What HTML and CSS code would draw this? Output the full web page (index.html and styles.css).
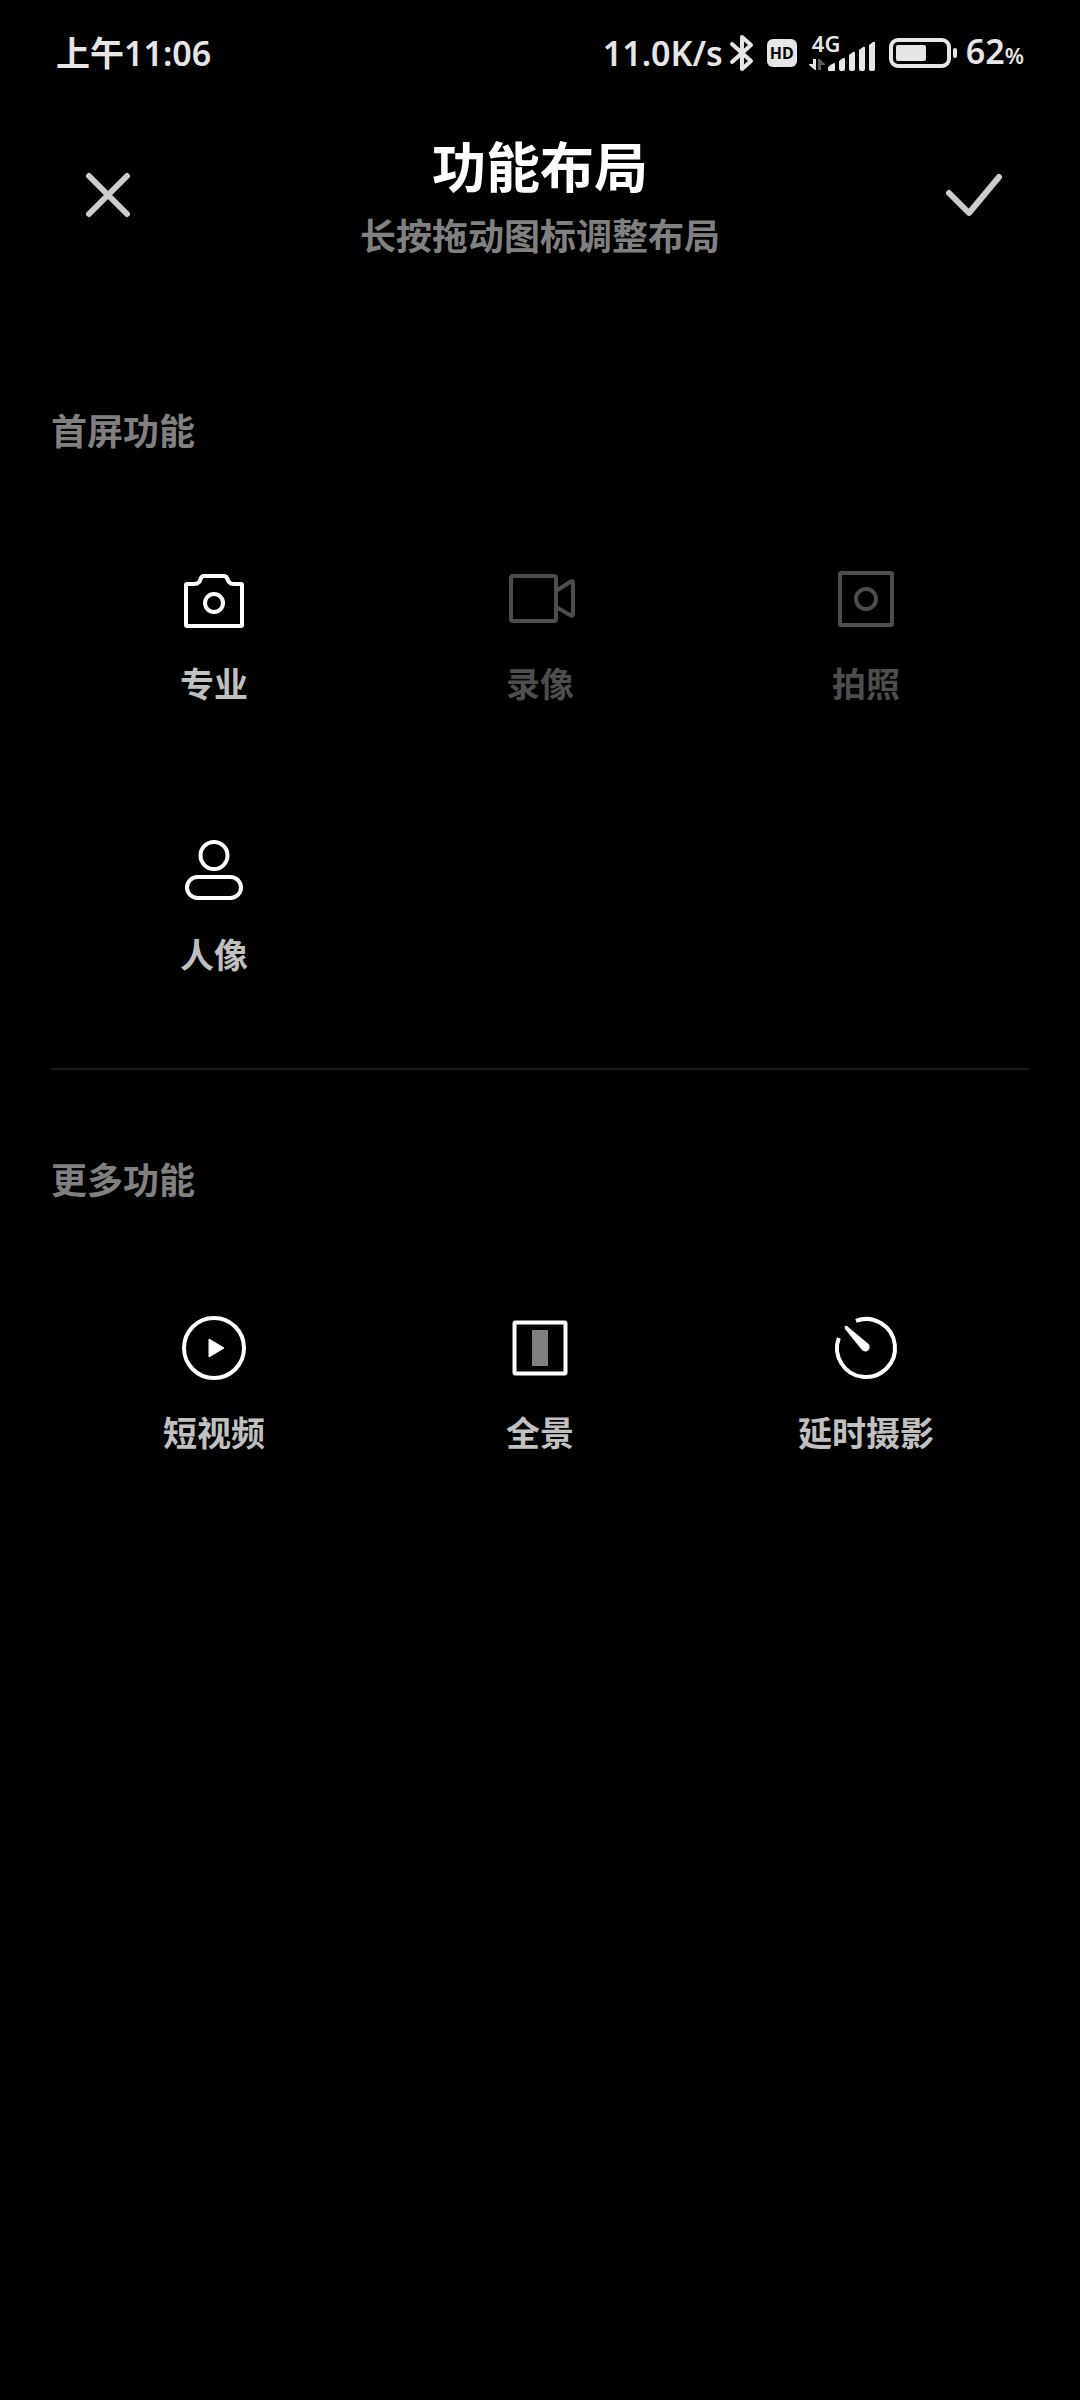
FILE: index.html
```html
<!DOCTYPE html>
<html lang="zh-CN">

<head>
  <meta charset="UTF-8">
  <meta name="viewport" content="width=device-width, initial-scale=1.0">
  <title>功能布局</title>
  <link rel="stylesheet" href="styles.css">
</head>

<body>
  <div class="status">
    <time class="status-time">上午11:06</time>
    <div class="status-right">
      <span class="speed">11.0K/s</span>
      <svg class="bluetooth" width="26" height="40" viewBox="0 0 26 40" fill="none" aria-hidden="true">
        <path d="M3 11 L22 28 L13 36 V4 L22 12 L3 29" stroke="currentColor" stroke-width="4" stroke-linecap="round" stroke-linejoin="round" />
      </svg>
      <span class="hd">HD</span>
      <div class="signal">
        <span class="network">4G</span>
        <svg width="68" height="36" viewBox="0 0 68 36" fill="currentColor" aria-hidden="true">
          <path d="M4 24 H7 V35 H6 L0 30 V29 H4 Z" />
          <path opacity=".4" d="M9 35 V24 H11 L16 29 V30 H12 V35 Z" />
          <path d="M19 33 Q19 31 25 28 Q26 28 26 29 V35 Q26 36 25 36 H20 Q19 36 19 35 Z" />
          <path d="M30 26 L34 23 Q36 22 36 24 V34 Q36 36 34 36 H32 Q30 36 30 34 Z" />
          <path d="M40 20 L44 17 Q46 16 46 18 V34 Q46 36 44 36 H42 Q40 36 40 34 Z" />
          <path d="M50 15 L54 12 Q56 11 56 13 V34 Q56 36 54 36 H52 Q50 36 50 34 Z" />
          <path d="M60 10 L64 7 Q66 6 66 8 V34 Q66 36 64 36 H62 Q60 36 60 34 Z" />
        </svg>
      </div>
      <svg class="battery" width="68" height="30" viewBox="0 0 68 30" aria-hidden="true">
        <rect x="2" y="2" width="58" height="26" rx="7" fill="none" stroke="currentColor" stroke-width="4" />
        <rect x="7" y="7" width="30" height="16" rx="2" fill="currentColor" />
        <rect x="64" y="10" width="4" height="10" rx="2" fill="currentColor" />
      </svg>
      <span class="level">62<small>%</small></span>
    </div>
  </div>

  <header class="header">
    <button class="icon-button" type="button" aria-label="取消">
      <svg width="72" height="72" viewBox="0 0 72 72" fill="none" stroke="currentColor" stroke-width="6" stroke-linecap="round">
        <path d="M17 18 L55 56 M55 18 L17 56" />
      </svg>
    </button>
    <div class="heading">
      <h1>功能布局</h1>
      <p>长按拖动图标调整布局</p>
    </div>
    <button class="icon-button" type="button" aria-label="完成">
      <svg width="72" height="72" viewBox="0 0 72 72" fill="none" stroke="currentColor" stroke-width="6" stroke-linecap="round" stroke-linejoin="round">
        <path d="M13 35 L33 55 L63 19" />
      </svg>
    </button>
  </header>

  <main>
    <section class="group">
      <h2>首屏功能</h2>
      <ul class="modes">
        <li>
          <button class="mode" type="button">
            <svg width="72" height="72" viewBox="0 0 72 72" fill="none" stroke="currentColor" stroke-width="4">
              <path d="M8 22 Q8 21 9 21 H16 C21 21 22 18 23 15 Q24 13 26 13 H46 Q48 13 49 15 C50 18 51 21 56 21 H63 Q64 21 64 22 V62 Q64 63 63 63 H9 Q8 63 8 62 Z" />
              <circle cx="36" cy="40" r="9" />
            </svg>
            <span>专业</span>
          </button>
        </li>
        <li>
          <button class="mode" type="button" disabled>
            <svg width="72" height="72" viewBox="0 0 72 72" fill="none" stroke="currentColor" stroke-width="4" stroke-linejoin="round">
              <rect x="7" y="13" width="45" height="45" rx="2" />
              <path d="M52 28 L66 19 Q69 17 69 20 V51 Q69 54 66 52 L52 44" />
            </svg>
            <span>录像</span>
          </button>
        </li>
        <li>
          <button class="mode" type="button" disabled>
            <svg width="72" height="72" viewBox="0 0 72 72" fill="none" stroke="currentColor" stroke-width="4">
              <rect x="10" y="10" width="52" height="52" rx="1" />
              <circle cx="36" cy="36" r="10" />
            </svg>
            <span>拍照</span>
          </button>
        </li>
        <li>
          <button class="mode" type="button">
            <svg width="72" height="72" viewBox="0 0 72 72" fill="none" stroke="currentColor" stroke-width="4">
              <circle cx="36" cy="21.5" r="13.5" />
              <rect x="9" y="43" width="54" height="21" rx="10.5" />
            </svg>
            <span>人像</span>
          </button>
        </li>
      </ul>
    </section>

    <section class="group">
      <h2>更多功能</h2>
      <ul class="modes">
        <li>
          <button class="mode" type="button">
            <svg width="72" height="72" viewBox="0 0 72 72" fill="none" stroke="currentColor" stroke-width="4">
              <circle cx="36" cy="36" r="30" />
              <path d="M31 27 L46 36 L31 45 Z" fill="currentColor" stroke="currentColor" stroke-width="1" stroke-linejoin="round" />
            </svg>
            <span>短视频</span>
          </button>
        </li>
        <li>
          <button class="mode" type="button">
            <svg width="72" height="72" viewBox="0 0 72 72" fill="none" stroke="currentColor" stroke-width="4">
              <rect x="10.5" y="10.5" width="51" height="51" rx="1" />
              <rect x="28" y="18" width="16" height="36" rx="1" fill="#808080" stroke="none" />
            </svg>
            <span>全景</span>
          </button>
        </li>
        <li>
          <button class="mode" type="button">
            <svg width="72" height="72" viewBox="0 0 72 72" fill="none" stroke="currentColor" stroke-width="4">
              <path d="M26 8.8 A29 29 0 1 1 8.8 26" />
              <path d="M17 14 Q14 13 15 17 L32 38 A4.2 4.2 0 1 0 38.500 32 Z" fill="currentColor" stroke="none" />
            </svg>
            <span>延时摄影</span>
          </button>
        </li>
      </ul>
    </section>
  </main>
</body>

</html>
```
FILE: styles.css
```css
* {
  box-sizing: border-box;
  margin: 0;
  padding: 0;
}

body {
  min-height: 100vh;
  background: #000;
  color: #e6e6e6;
  font-family: "Noto Sans CJK SC", sans-serif;
  font-weight: 700;
}

svg {
  display: block;
}

button {
  background: none;
  border: 0;
  font: inherit;
  cursor: pointer;
}

/* Status bar */
.status {
  display: flex;
  align-items: center;
  justify-content: space-between;
  height: 105px;
  padding: 0 56px;
  font-family: "Noto Sans", "Noto Sans CJK SC", sans-serif;
  font-size: 34px;
  font-weight: 600;
  line-height: 48px;
}

.status-right {
  display: flex;
  align-items: center;
  gap: 12px;
}

.speed {
  margin-right: -6px;
}

.hd {
  width: 30px;
  height: 28px;
  border-radius: 6px;
  background: #e6e6e6;
  color: #000;
  font-size: 16px;
  font-weight: 700;
  line-height: 28px;
  text-align: center;
}

.signal {
  position: relative;
}

.network {
  position: absolute;
  top: -4px;
  left: 3px;
  font-size: 22px;
  line-height: 24px;
}

.battery {
  margin-right: -3px;
}

.level small {
  font-size: 22px;
}

/* Header */
.header {
  display: flex;
  align-items: center;
  justify-content: space-between;
  padding: 24px 72px 0;
}

.icon-button {
  color: #ccc;
}

.heading {
  text-align: center;
}

.heading h1 {
  margin-bottom: 9px;
  color: #fff;
  font-size: 54px;
  line-height: 72px;
}

.heading p {
  color: #808080;
  font-size: 36px;
  line-height: 48px;
}

/* Mode groups */
main {
  padding: 63px 51px;
}

.group {
  padding: 82px 0 90px;
}

.group + .group {
  border-top: 2px solid #1c1c1c;
}

.group h2 {
  margin-bottom: 108px;
  color: #808080;
  font-size: 36px;
  line-height: 52px;
}

.modes {
  display: grid;
  grid-template-columns: repeat(3, 1fr);
  row-gap: 127px;
  list-style: none;
}

.mode {
  display: flex;
  flex-direction: column;
  align-items: center;
  gap: 24px;
  width: 100%;
  color: #fff;
  font-size: 34px;
  line-height: 48px;
}

.mode span {
  color: #c0c0c0;
}

.mode:disabled,
.mode:disabled span {
  color: #4d4d4d;
}
```
